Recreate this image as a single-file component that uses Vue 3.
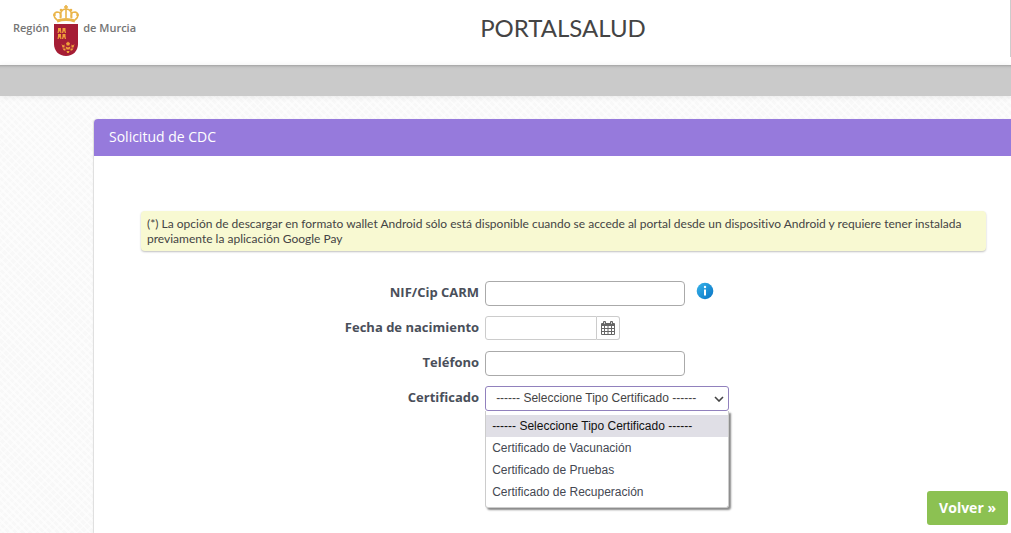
<script setup>
import { ref } from 'vue'

const options = [
  '------ Seleccione Tipo Certificado ------',
  'Certificado de Vacunación',
  'Certificado de Pruebas',
  'Certificado de Recuperación',
]
const selected = ref(options[0])
const nif = ref('')
const birth = ref('')
const phone = ref('')
</script>

<template>
  <div class="page">
    <header class="top">
      <a class="brand" href="#" aria-label="Región de Murcia">
        <span>Región</span>
        <svg class="crest" width="26" height="52" viewBox="0 0 26 52" aria-hidden="true">
          <g fill="none" stroke="#eab54a" stroke-width="1.600">
            <path d="M4 15C0 12 0 8 4 7C8 7 9 10 7 13" />
            <path d="M22 15C26 12 26 8 22 7C18 7 17 10 19 13" />
            <path d="M8 13C6 8 9 4 13 4C17 4 20 8 18 13" />
            <path d="M13 4V13M13 0V4M11 2H15" />
            <path d="M4 16Q13 13 22 16" stroke-width="3" />
          </g>
          <g fill="#eab54a">
            <circle cx="8" cy="5" r="1.300" /><circle cx="18" cy="5" r="1.300" />
            <circle cx="1.500" cy="10" r="1.300" /><circle cx="24.500" cy="10" r="1.300" />
          </g>
          <path d="M1 19H25V39C25 46 20 51 13 51C6 51 1 46 1 39Z" fill="#a51d35" />
          <g fill="#f0a23a">
            <path d="M5 23H8V25L8.500 28H7.200V26.500H5.800V28H4.500L5 25Z" />
            <path d="M9.500 23H12.500V25L13 28H11.700V26.500H10.300V28H9L9.500 25Z" />
            <path d="M5 29H8V31L8.500 34H7.200V32.500H5.800V34H4.500L5 31Z" />
            <path d="M9.500 29H12.500V31L13 34H11.700V32.500H10.300V34H9L9.500 31Z" />
            <path d="M13 38L14.200 37.500L15 36.500L15.800 37.500L17 38L16.300 40.500H13.700ZM8.500 39L10 40.500L11.500 39.500V42.500H9.500ZM21.500 39L20 40.500L18.500 39.500V42.500H20.500ZM12.500 41.500L15 42.500L17.500 41.500L16.500 44.500H13.500ZM9.500 43.500H12.500V45.500H11ZM17.500 43.500H20.500L19 45.500H17.500ZM13.500 46H16.500L15.800 48H14.200Z" />
          </g>
        </svg>
        <span>de Murcia</span>
      </a>
      <h1>PORTALSALUD</h1>
      <i class="rule"></i>
    </header>
    <nav class="strip"></nav>

    <main class="card">
      <h2>Solicitud de CDC</h2>
      <p class="note">(*) La opción de descargar en formato wallet Android sólo está disponible cuando se accede al portal desde un dispositivo Android y requiere tener instalada previamente la aplicación Google Pay</p>

      <form @submit.prevent>
        <div class="row">
          <label for="nif">NIF/Cip CARM</label>
          <div class="field">
            <input id="nif" v-model="nif" class="text" type="text" />
            <button class="info" type="button" aria-label="Información">
              <svg width="18" height="18" viewBox="0 0 18 18" aria-hidden="true">
                <defs>
                  <linearGradient id="blue" x1="0" y1="0" x2="1" y2="1">
                    <stop offset="0" stop-color="#38b4ea" /><stop offset="1" stop-color="#0873c4" />
                  </linearGradient>
                </defs>
                <circle cx="9" cy="9" r="8.300" fill="url(#blue)" />
                <circle cx="9" cy="5" r="1.200" fill="#fff" />
                <path d="M8 7.500H10V13.500H8Z" fill="#fff" />
              </svg>
            </button>
          </div>
        </div>
        <div class="row">
          <label for="birth">Fecha de nacimiento</label>
          <div class="field">
            <input id="birth" v-model="birth" class="text date" type="text" />
            <button class="calendar" type="button" aria-label="Abrir calendario">
              <svg width="14" height="14" viewBox="0 0 14 14" aria-hidden="true">
                <rect x="0" y="2" width="14" height="12" rx="1" fill="#666" />
                <rect x="2" y="0" width="3" height="4" rx="1" fill="#666" />
                <rect x="9" y="0" width="3" height="4" rx="1" fill="#666" />
                <path d="M3 1H4V3H3ZM10 1H11V3H10Z" fill="#ccc" />
                <path d="M1 5H3V7H1ZM4 5H6.500V7H4ZM7.500 5H10V7H7.500ZM11 5H13V7H11ZM1 8H3V10H1ZM4 8H6.500V10H4ZM7.500 8H10V10H7.500ZM11 8H13V10H11ZM1 11H3V13H1ZM4 11H6.500V13H4ZM7.500 11H10V13H7.500ZM11 11H13V13H11Z" fill="#fff" />
              </svg>
            </button>
          </div>
        </div>
        <div class="row">
          <label for="phone">Teléfono</label>
          <div class="field">
            <input id="phone" v-model="phone" class="text" type="tel" />
          </div>
        </div>
        <div class="row">
          <label for="certificate">Certificado</label>
          <div class="field">
            <select id="certificate" v-model="selected">
              <option v-for="option in options" :key="option">{{ option }}</option>
            </select>
            <svg class="arrow" width="10" height="6" viewBox="0 0 10 6" aria-hidden="true">
              <path d="M1 1L5 5L9 1" fill="none" stroke="#444" stroke-width="1.600" />
            </svg>
            <ul class="menu" role="listbox" aria-label="Certificado">
              <li
                v-for="option in options"
                :key="option"
                role="option"
                :aria-selected="option === selected"
                :class="{ active: option === selected }"
                @click="selected = option"
              >{{ option }}</li>
            </ul>
          </div>
        </div>
        <div class="actions">
          <button class="back" type="button">Volver »</button>
        </div>
      </form>
    </main>
  </div>
</template>

<style>
body {
  margin: 0;
  overflow: hidden;
}
</style>

<style scoped>
* {
  box-sizing: border-box;
}
.page {
  display: flex;
  flex-direction: column;
  min-height: 100vh;
  font-family: "Open Sans", "Noto Sans", sans-serif;
  font-size: 13px;
  color: #4a4f5a;
  background:
    repeating-linear-gradient(45deg, transparent 0 3px, rgba(255, 255, 255, 0.6) 3px 5px),
    repeating-linear-gradient(135deg, #f8f8f8 0 4px, #fbfbfb 4px 6px);
}
.top {
  display: grid;
  grid-template-columns: 1fr auto 1fr;
  height: 65px;
  padding-left: 13px;
  background: #fff;
}
.brand {
  display: flex;
  gap: 4px;
  height: 57px;
  padding-top: 5px;
  color: #757575;
  font-size: 11px;
  font-weight: 600;
  line-height: 46px;
  text-decoration: none;
  white-space: nowrap;
}
.crest {
  display: block;
}
h1 {
  margin: 0 0 0 102px;
  font-family: Lato, sans-serif;
  font-size: 24px;
  font-weight: 400;
  line-height: 56px;
  color: #444;
}
.rule {
  justify-self: end;
  width: 1px;
  height: 57px;
  background: #ccc;
}
.strip {
  height: 31px;
  background: linear-gradient(#a4a4a4, #c2c2c2 2px, #cacaca 4px);
  box-shadow: 0 1px 6px rgba(0, 0, 0, 0.08);
}
.card {
  display: flex;
  flex: 1;
  flex-direction: column;
  margin: 23px 0 0 94px;
  border-radius: 4px 0 0 0;
  background: #fff;
  box-shadow: -1px 0 1px #ddd;
}
h2 {
  margin: 0;
  padding: 0 0 2px 15px;
  border-radius: 4px 0 0 0;
  background: #967adc;
  color: #fff;
  font-size: 14px;
  font-weight: 400;
  line-height: 35px;
}
.note {
  margin: 55px 25px 30px 47px;
  padding: 5px 6px;
  border-radius: 4px;
  background: #f8f9d2;
  box-shadow: 0 1px 2px rgba(0, 0, 0, 0.25);
  color: #444;
  font-family: Lato, sans-serif;
  font-size: 12px;
  font-variant-ligatures: none;
  line-height: 15px;
}
form {
  display: flex;
  flex-direction: column;
  gap: 10px;
}
.row {
  display: grid;
  grid-template-columns: 42% 1fr;
  gap: 6px;
}
.row label {
  text-align: right;
  font-weight: 700;
  line-height: 23px;
}
.field {
  position: relative;
  display: flex;
  height: 25px;
}
.text {
  width: 200px;
  height: 25px;
  padding: 0 8px;
  border: 1px solid #aaa;
  border-radius: 4px;
  background: #fff;
}
.date {
  width: 112px;
  height: 24px;
  border-color: #ccc;
  border-radius: 3px 0 0 3px;
}
.info {
  display: flex;
  align-items: center;
  height: 20px;
  margin-left: 11px;
  padding: 0;
  border: 0;
  background: none;
}
.calendar {
  display: flex;
  align-items: center;
  justify-content: center;
  width: 23px;
  height: 24px;
  padding: 0;
  border: 1px solid #ccc;
  border-left: 0;
  border-radius: 0 3px 3px 0;
  background: #fff;
}
select {
  appearance: none;
  width: 244px;
  height: 25px;
  padding: 0 10px 2px;
  border: 1px solid #9181bd;
  border-radius: 3px;
  background: #fff;
  color: #444;
  font-family: "Liberation Sans", sans-serif;
  font-size: 12px;
}
.arrow {
  position: absolute;
  top: 10px;
  left: 229px;
  pointer-events: none;
}
.menu {
  position: absolute;
  top: 25px;
  left: 0;
  width: 244px;
  margin: 0;
  padding: 4px 0;
  border: 1px solid #ccc;
  border-top: 0;
  border-radius: 0 0 3px 3px;
  background: #fff;
  box-shadow: 2px 2px 2px #888;
  color: #444852;
  font-family: "Liberation Sans", sans-serif;
  font-size: 12px;
  line-height: 22px;
  list-style: none;
}
.menu li {
  padding: 0 6px;
}
.menu .active {
  background: #e0dfe6;
  color: #111;
}
.actions {
  display: flex;
  justify-content: flex-end;
  padding: 70px 3px 8px;
}
.back {
  height: 34px;
  padding: 0 12px 2px;
  border: 0;
  border-radius: 3px;
  background: #8cc152;
  color: #fff;
  font-family: inherit;
  font-size: 14px;
  font-weight: 700;
}
</style>
